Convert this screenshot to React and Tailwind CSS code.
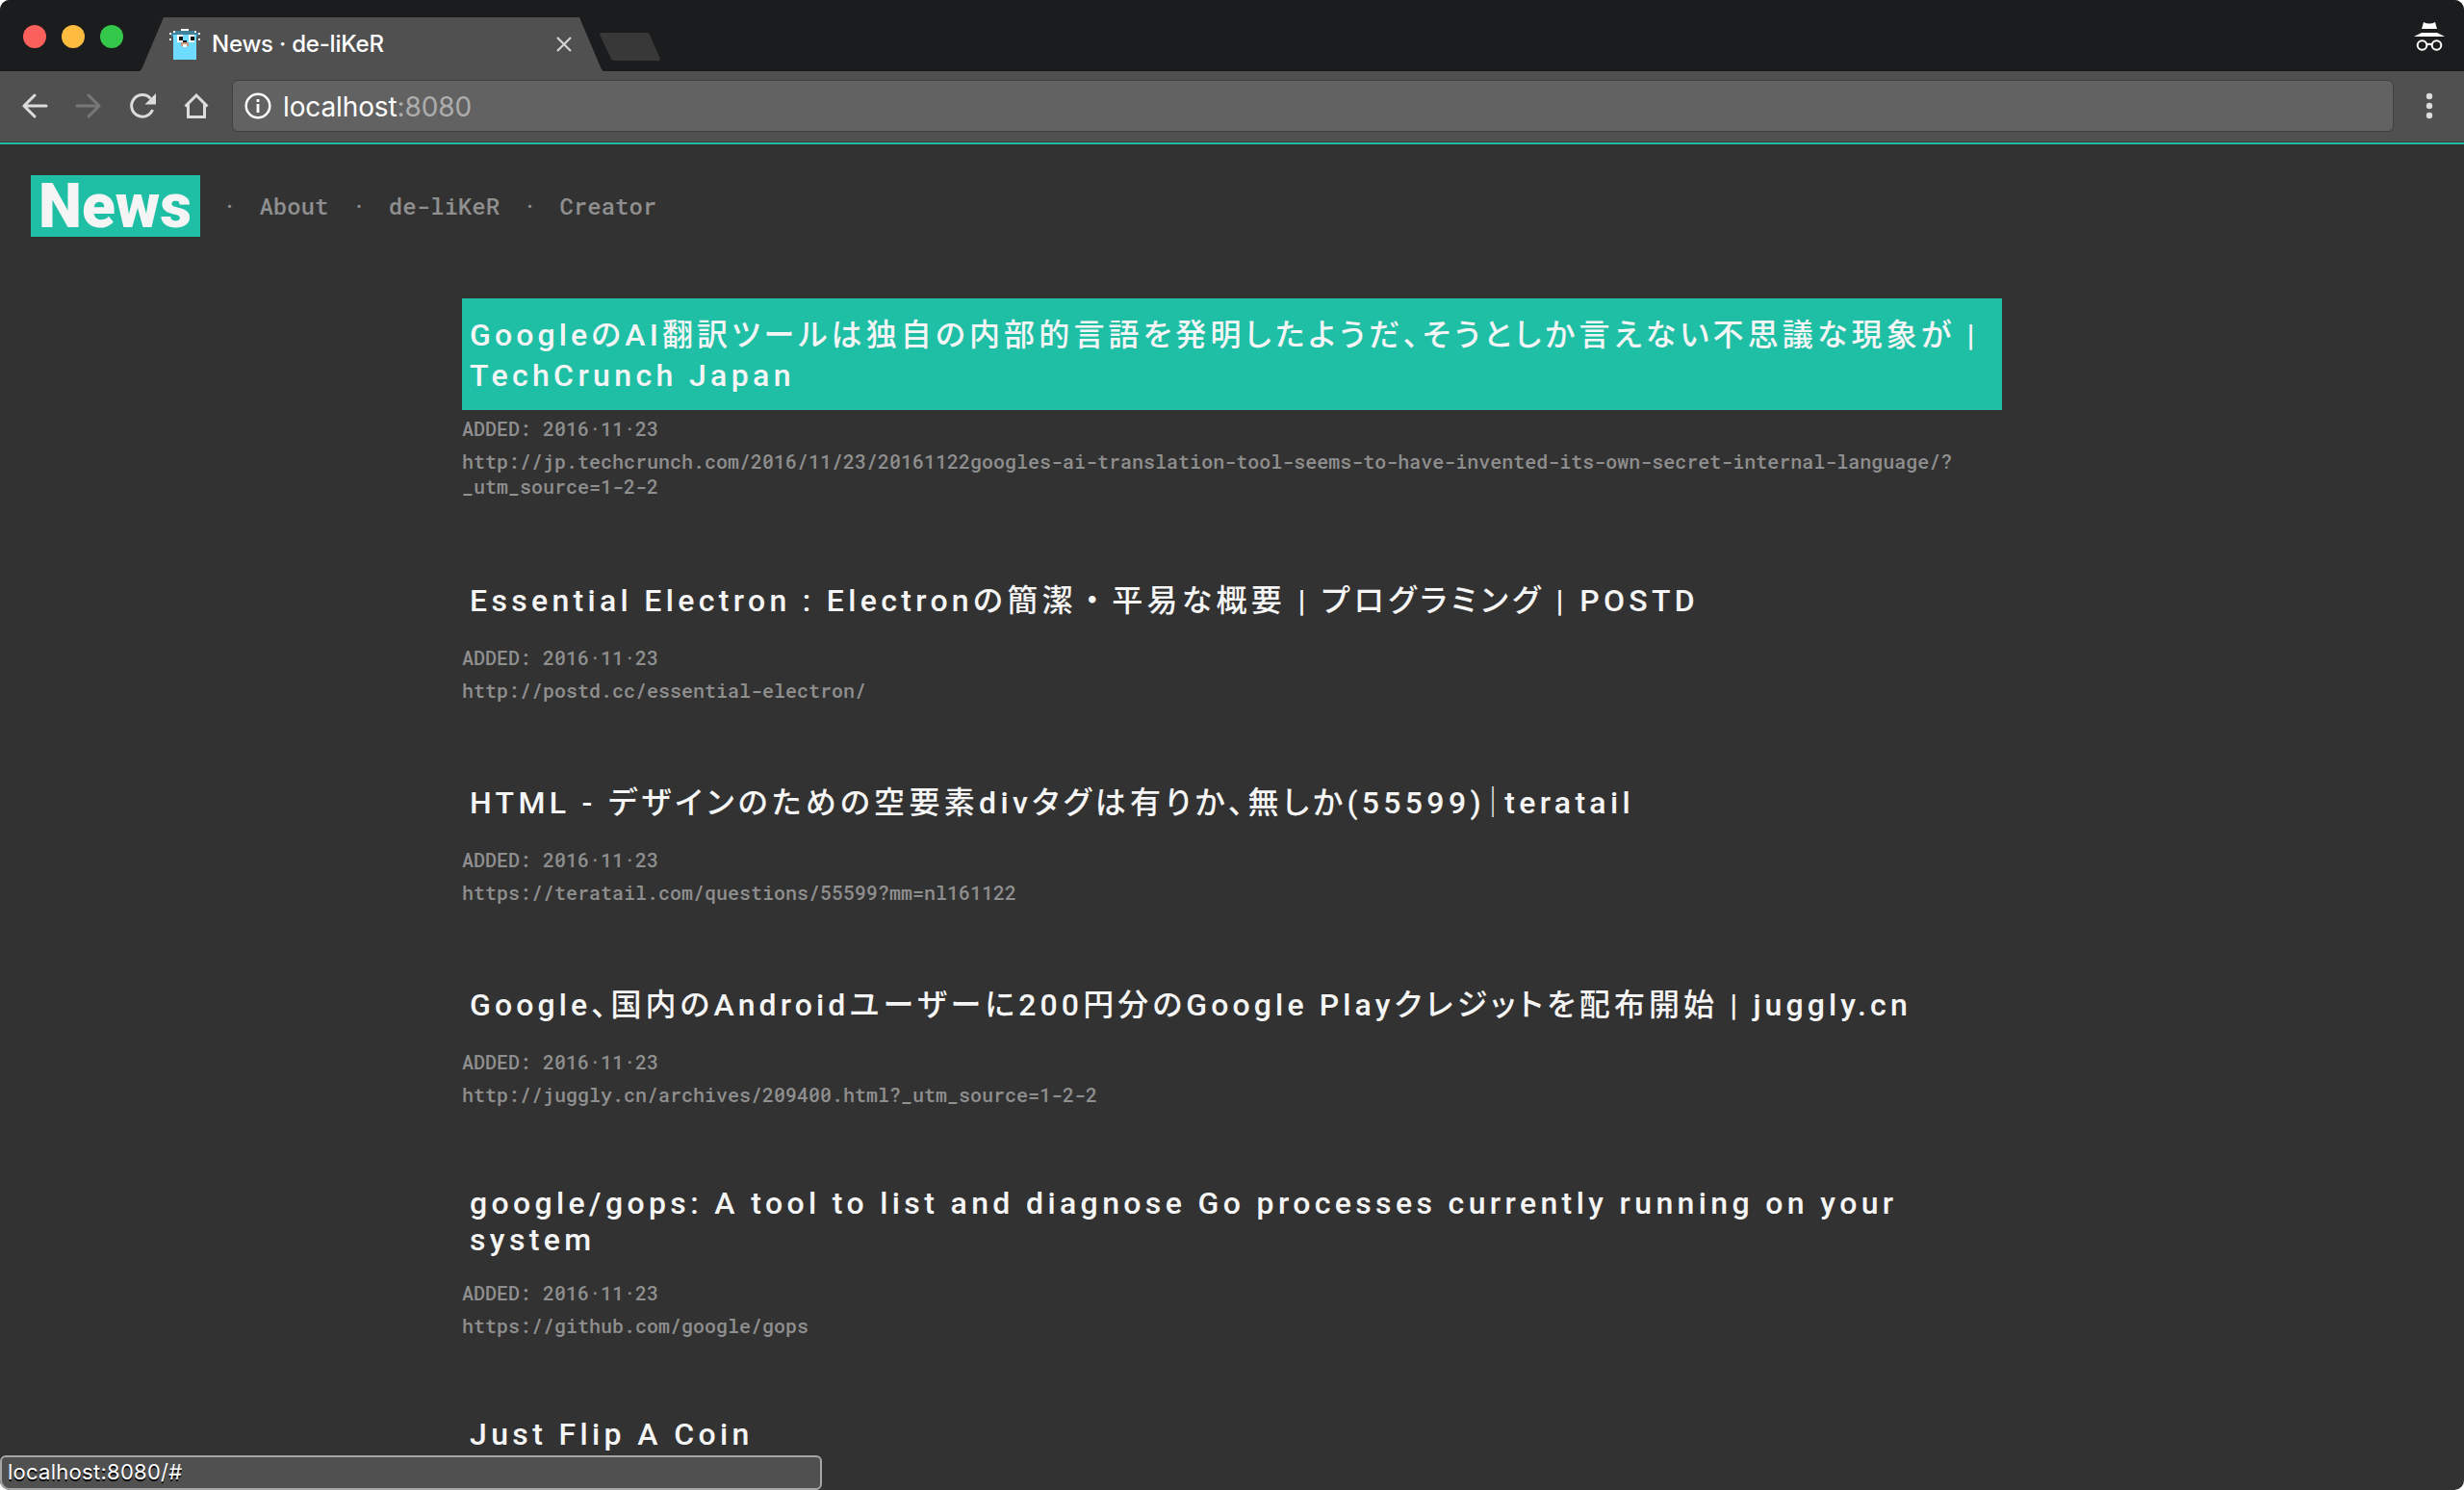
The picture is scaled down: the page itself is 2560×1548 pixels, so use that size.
import React from "react";

const ITEMS = [
  {
    lines: ["GoogleのAI翻訳ツールは独自の内部的言語を発明したようだ、そうとしか言えない不思議な現象が |", <span className="tracking-[4.37px]">TechCrunch Japan</span>],
    url: ["http://jp.techcrunch.com/2016/11/23/20161122googles-ai-translation-tool-seems-to-have-invented-its-own-secret-internal-language/?", "_utm_source=1-2-2"],
    title: "bg-[#1fbfa6] leading-[42px] h-[116px] pt-[17px] tracking-[4.14px]",
    gap: "mb-[68px]",
  },
  {
    lines: [<>Essential Electron : Electronの簡潔<span className="[font-feature-settings:normal]">・</span>平易な概要 | プログラミング | POSTD</>],
    url: ["http://postd.cc/essential-electron/"],
    title: "leading-[42px] h-[78px] pt-[17px] tracking-[4.32px]",
    gap: "mb-[66px]",
  },
  {
    lines: [<>HTML - デザインのための空要素divタグは有りか、無しか(55599)<span className="-ml-2 -mr-2">│</span>teratail</>],
    url: ["https://teratail.com/questions/55599?mm=nl161122"],
    title: "leading-[42px] h-[78px] pt-[17px] tracking-[4.33px]",
    gap: "mb-[66px]",
  },
  {
    lines: ["Google、国内のAndroidユーザーに200円分のGoogle Playクレジットを配布開始 | juggly.cn"],
    url: ["http://juggly.cn/archives/209400.html?_utm_source=1-2-2"],
    title: "leading-[42px] h-[78px] pt-[17px] tracking-[4.12px]",
    gap: "mb-[66px]",
  },
  {
    lines: ["google/gops: A tool to list and diagnose Go processes currently running on your", "system"],
    url: ["https://github.com/google/gops"],
    title: "leading-[38px] h-[108px] pt-[15px] tracking-[4.37px]",
    gap: "mb-[66px]",
  },
  { lines: ["Just Flip A Coin"], title: "leading-[38px] h-[70px] pt-[15px] tracking-[4.37px]", gap: "mb-0" },
];

function TabStrip() {
  return (
    <div className="h-[74px] bg-[#1b1c1d] flex">
      <div className="flex gap-4 pl-6 pt-[26px] w-[145px]">
        <span className="size-6 rounded-full bg-[#fc605c]" />
        <span className="size-6 rounded-full bg-[#fdbc40]" />
        <span className="size-6 rounded-full bg-[#34c84a]" />
      </div>
      <div className="mt-[18px] h-14 w-[482px] bg-[#505050] flex items-center [clip-path:polygon(0_100%,2px_97%,25px_0,457px_0,480px_97%,100%_100%)]">
        <Gopher />
        <span className="ml-3 w-[358px] text-[24px] font-medium tracking-[-0.22px] text-white whitespace-nowrap">News · de-liKeR</span>
        <svg className="w-4 h-4" viewBox="0 0 16 16" stroke="#d4d4d4" strokeWidth="2.2"><path d="M1 1L15 15M15 1L1 15" /></svg>
      </div>
      <svg className="mt-[33px] -ml-1 w-[64px] h-[31px]" viewBox="0 0 64 31"><path d="M2 1H49q2 0 3 2L63 28q0 2-2 2H15q-2 0-3-2L0 3Q0 1 2 1Z" fill="#383838" /></svg>
      <svg className="ml-auto mr-[20px] mt-[22px] w-8 h-8" viewBox="0 0 32 32">
        <path fill="#fff" d="M10 1q6 3 12 0l2 7H8ZM8 12H24L32 16H0Z" />
        <g fill="none" stroke="#fff" strokeWidth="2"><circle cx="8.5" cy="25" r="4.8" /><circle cx="23.5" cy="25" r="4.8" /><path d="M13 24.5q3-1.5 6 0" /></g>
      </svg>
    </div>
  );
}

function Gopher() {
  return (
    <svg className="ml-[31px] w-8 h-8 shrink-0" viewBox="0 0 32 32" shapeRendering="crispEdges">
      <path fill="#6edcff" d="M4 4H28V32H4Z" />
      <path fill="#3f8199" d="M4 2H28V4H30V8H28V6H4V8H2V4H4Z" />
      <path fill="#fff" d="M12 0H20V2H12ZM4 2H6V4H4ZM26 2H28V4H26ZM0 4H2V6H0ZM30 4H32V6H30ZM0 10H2V12H0ZM30 10H32V12H30ZM8 6H14V14H8ZM20 6H26V14H20Z" />
      <path fill="#111" d="M10 8H14V12H10ZM22 8H26V12H22ZM14 12H18V14H14Z" />
      <path fill="#c99583" d="M12 14H20V18H12Z" />
      <path fill="#fff" d="M14 16H18V19H14Z" />
    </svg>
  );
}

function Toolbar() {
  return (
    <div className="h-[74px] bg-[#505050] border-b border-[#3a3a3a] flex items-center pl-[22px]">
      <svg className="w-[196px] h-7 shrink-0 -mt-0.5" viewBox="0 0 196 28" fill="none" stroke="#dcdcdc" strokeWidth="3">
        <path strokeLinecap="round" d="M26 14H3M14 3L3 14L14 25" />
        <path stroke="#777" strokeLinecap="round" d="M58 14H81M70 3L81 14L70 25" />
        <path d="M134.500 6.500A11.300 11.300 0 1 0 136.500 18" />
        <path fill="#dcdcdc" stroke="none" d="M140 1V12.500H128.500Z" />
        <path d="M170.500 14.500L182 3L193.500 14.500M173.500 12V25.500H190.500V12" />
      </svg>
      <div className="ml-[23px] w-[2246px] h-[54px] -mt-0.5 rounded-[6px] border border-[#3e3e3e] bg-[#626262] flex items-center pl-3">
        <svg className="w-7 h-7" viewBox="0 0 28 28"><circle cx="14" cy="14" r="12.300" fill="none" stroke="#fff" strokeWidth="2.500" /><path fill="#fff" d="M12.600 7H15.400V10H12.600ZM12.600 12H15.400V21H12.600Z" /></svg>
        <span className="ml-3 mt-0.5 text-[28px] tracking-[-0.12px] text-white">localhost<span className="text-[#adadad]">:8080</span></span>
      </div>
      <svg className="ml-[33px] -mt-0.5 w-2 h-7" viewBox="0 0 8 28" fill="#dcdcdc"><circle cx="4" cy="4" r="3.200" /><circle cx="4" cy="14" r="3.200" /><circle cx="4" cy="24" r="3.200" /></svg>
    </div>
  );
}

const MONO = "font-['Roboto_Mono','DejaVu_Sans_Mono',monospace] font-medium";

export default function App() {
  return (
    <div className="w-[2560px] h-[1548px] bg-white font-[Inter,sans-serif]">
      <div className="relative w-full h-full overflow-hidden rounded-[10px] bg-[#323232]">
        <TabStrip />
        <Toolbar />
        <div className="h-0.5 bg-[#1fbfa6]" />
        <header className={`flex items-center pl-8 pt-8 text-[24px] text-[#8f8f8f] whitespace-pre ${MONO}`}>
          <h1 className="w-44 h-16 bg-[#1fbfa6] pl-2 text-[64px] leading-[66px] font-black text-[#f5f5f5] font-[Roboto,sans-serif]">News</h1>
          <span className="ml-[23px]">·</span>
          <span className="ml-[24px] w-[72px]">About</span>
          <span className="ml-[24px]">·</span>
          <span className="ml-[24px]">de-liKeR</span>
          <span className="ml-[24px]">·</span>
          <span className="ml-[24px]">Creator</span>
        </header>
        <main className="mt-16 mx-auto w-[1600px]">
          {ITEMS.map((it, i) => (
            <article key={i} className={`whitespace-nowrap ${it.gap}`}>
              <h2 className={`px-2 text-[32px] font-medium text-[#f5f5f5] font-[Roboto,'Noto_Sans_CJK_JP',sans-serif] [font-feature-settings:'palt'] ${it.title}`}>
                {it.lines.map((l, j) => <div key={j}>{l}</div>)}
              </h2>
              {it.url && (
                <div className={`pt-1.5 text-[20px] leading-[26px] text-[#8f8f8f] ${MONO}`}>
                  <p>ADDED: 2016·11·23</p>
                  <div className="mt-2">{it.url.map((u) => <p key={u}>{u}</p>)}</div>
                </div>
              )}
            </article>
          ))}
        </main>
        <div className="absolute left-0 bottom-0 w-[854px] h-9 rounded-[6px] rounded-bl-[10px] border-2 border-[#a6a6a6] bg-[#505050] pl-1.5 text-[22px] leading-[31px] tracking-[0.27px] text-white [text-shadow:0_2px_0_#000]">localhost:8080/#</div>
      </div>
    </div>
  );
}
